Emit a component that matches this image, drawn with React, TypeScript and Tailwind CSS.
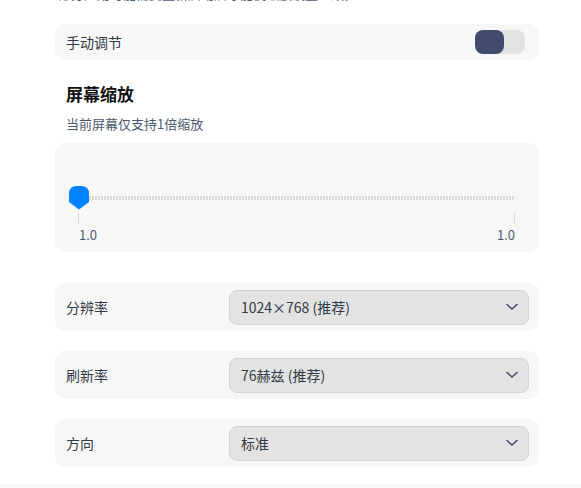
import React from "react";

const font = { fontFamily: '"Noto Sans CJK SC", "Noto Sans", sans-serif' };

function Chevron() {
  return (
    <svg width="12" height="8" viewBox="0 0 12 8" fill="none">
      <path d="M1 1.5 L6 6 L11 1.5" stroke="#414b6b" strokeWidth="1.5" strokeLinecap="round" strokeLinejoin="round" />
    </svg>
  );
}

function SelectRow({ label, value }: { label: string; value: string }) {
  return (
    <div className="flex h-[48px] items-center rounded-[10px] bg-[#f7f7f7] pl-[11px] pr-[10px]">
      <div className="w-[163px] text-[14px] text-[#333a45]">{label}</div>
      <div className="flex h-[35px] flex-1 items-center justify-between rounded-[8px] border border-[#d3d3d3] bg-[#e3e3e3] pl-[11px] pr-[10px]">
        <span className="text-[14px] text-[#333a45]">{value}</span>
        <Chevron />
      </div>
    </div>
  );
}

export default function App() {
  return (
    <div className="relative h-[488px] w-[581px] overflow-hidden bg-white" style={font}>
      <div className="pl-[55px] pr-[42px]">
        <div className="-mt-[15px] h-[18px] overflow-hidden pl-[3px] text-[13px] leading-[18px] text-[#4c5a6e]">
          部分应用可能需要重新启动后才能使缩放设置生效。
        </div>
        <div className="mt-[21px] flex h-[36px] items-center justify-between rounded-[10px] bg-[#f7f7f7] pl-[11px] pr-[14px]">
          <span className="text-[14px] text-[#333a45]">手动调节</span>
          <div className="flex h-[24px] w-[50px] rounded-[8px] bg-[#e3e3e3]">
            <div className="h-[24px] w-[29px] rounded-[8px] bg-[#414b6b]" />
          </div>
        </div>
        <div className="mt-[22px] pl-[11px] text-[17px] font-bold leading-[24px] text-[#111]">屏幕缩放</div>
        <div className="mt-[9px] pl-[11px] text-[13px] leading-[18px] text-[#4c5a6e]">当前屏幕仅支持1倍缩放</div>
        <div className="mt-[10px] h-[109px] rounded-[10px] bg-[#f7f7f7] pl-[14px] pr-[24px] pt-[43px]">
          <div className="flex items-center">
            <svg width="20" height="24" viewBox="0 0 20 24" className="shrink-0">
              <path d="M0 8 Q0 0 8 0 H12 Q20 0 20 8 V16 L10 23.5 L0 16 Z" fill="#0081ff" />
            </svg>
            <div className="h-[4px] flex-1 bg-[repeating-linear-gradient(90deg,#dcdcdc_0px,#dcdcdc_2px,transparent_2px,transparent_3px)]" />
          </div>
          <div className="mt-[3px] flex justify-between pl-[9px]">
            <div className="h-[10px] w-px bg-[#d8d8d8]" />
            <div className="h-[10px] w-px bg-[#d8d8d8]" />
          </div>
          <div className="mt-[3px] flex justify-between pl-[10px] text-[13px] leading-[18px] text-[#4c5a6e]">
            <span>1.0</span>
            <span>1.0</span>
          </div>
        </div>
        <div className="mt-[31px] flex flex-col gap-[20px]">
          <SelectRow label="分辨率" value="1024×768 (推荐)" />
          <SelectRow label="刷新率" value="76赫兹 (推荐)" />
          <SelectRow label="方向" value="标准" />
        </div>
      </div>
      <div className="absolute bottom-0 left-0 h-[4px] w-full bg-[#f7f7f7]" />
    </div>
  );
}
